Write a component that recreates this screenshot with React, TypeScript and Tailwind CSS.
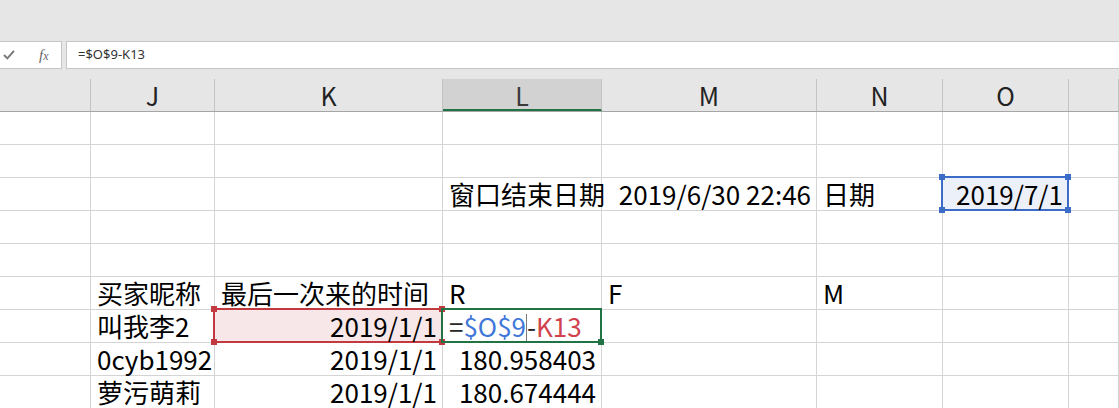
import React from "react";

type Cell = {
  text?: React.ReactNode;
  align?: "left" | "right";
  sel?: "blue" | "red" | "green";
};

const COLS = ["", "J", "K", "L", "M", "N", "O", ""];
const WIDTHS = "grid-cols-[91px_124px_228px_159px_215px_126px_126px_1fr]";

const ROWS: Cell[][] = [
  [],
  [],
  [
    {},
    {},
    {},
    { text: "窗口结束日期" },
    { text: "2019/6/30 22:46", align: "right" },
    { text: "日期" },
    { text: "2019/7/1", align: "right", sel: "blue" },
  ],
  [],
  [],
  [
    {},
    { text: "买家昵称" },
    { text: "最后一次来的时间" },
    { text: "R" },
    { text: "F" },
    { text: "M" },
  ],
  [
    {},
    { text: "叫我李2" },
    { text: "2019/1/1", align: "right", sel: "red" },
    {
      sel: "green",
      text: (
        <>
          <span className="text-[#262626]">=</span>
          <span className="text-[#3f78d8]">$O$9</span>
          <span className="inline-block w-px h-[27px] bg-[#7a7a7a] align-[-4px]" />
          <span className="text-[#262626]">-</span>
          <span className="text-[#d0434d]">K13</span>
        </>
      ),
    },
  ],
  [
    {},
    { text: "0cyb1992" },
    { text: "2019/1/1", align: "right" },
    { text: "180.958403", align: "right" },
  ],
  [
    {},
    { text: "萝污萌莉" },
    { text: "2019/1/1", align: "right" },
    { text: "180.674444", align: "right" },
  ],
];

function Handle({ pos, color }: { pos: string; color: string }) {
  return <span className={`absolute w-[6px] h-[6px] ${pos} ${color}`} />;
}

function Selection({ kind }: { kind: "blue" | "red" | "green" }) {
  if (kind === "blue") {
    return (
      <div className="absolute -left-[2px] -top-[2px] -right-[1px] -bottom-[1px] border-2 border-[#3a6cc8] bg-[#3a6cc8]/10 z-10 pointer-events-none">
        <Handle pos="-left-[4px] -top-[4px]" color="bg-[#3a6cc8]" />
        <Handle pos="-right-[4px] -top-[4px]" color="bg-[#3a6cc8]" />
        <Handle pos="-left-[4px] -bottom-[4px]" color="bg-[#3a6cc8]" />
        <Handle pos="-right-[4px] -bottom-[4px]" color="bg-[#3a6cc8]" />
      </div>
    );
  }
  if (kind === "red") {
    return (
      <div className="absolute -left-[2px] -top-[2px] -right-[1px] -bottom-[1px] border-2 border-[#c23a40] bg-[#c23a40]/12 z-10 pointer-events-none">
        <Handle pos="-left-[4px] -top-[4px]" color="bg-[#c23a40]" />
        <Handle pos="-right-[4px] -top-[4px]" color="bg-[#c23a40]" />
        <Handle pos="-left-[4px] -bottom-[4px]" color="bg-[#c23a40]" />
        <Handle pos="-right-[4px] -bottom-[4px]" color="bg-[#c23a40]" />
      </div>
    );
  }
  return (
    <div className="absolute -left-[2px] -top-[2px] -right-[1px] -bottom-[1px] border-2 border-[#217346] z-20 pointer-events-none">
      <Handle pos="-right-[4px] -bottom-[4px]" color="bg-[#217346]" />
    </div>
  );
}

function GridCell({ cell }: { cell?: Cell }) {
  const c = cell ?? {};
  return (
    <div
      className={`relative h-[33px] border-r border-b border-[#d4d4d4] leading-[32px] whitespace-nowrap ${
        c.align === "right" ? "text-right pr-[5px]" : "text-left pl-[6px]"
      }`}
    >
      {c.sel && <Selection kind={c.sel} />}
      <span className="relative z-30">{c.text}</span>
    </div>
  );
}

export default function App() {
  return (
    <div className="w-[1119px] h-[408px] overflow-hidden bg-white font-['Noto_Sans_CJK_SC',sans-serif] text-black">
      {/* ribbon leftover */}
      <div className="h-[41px] bg-[#e6e6e6]" />

      {/* formula bar */}
      <div className="flex h-[28px] bg-[#e6e6e6]">
        <div className="w-[62px] bg-white border border-l-0 border-[#c6c6c6] flex items-center">
          <svg viewBox="0 0 14 12" className="ml-[3px] w-[12px] h-[10px]" fill="none" stroke="#7a7a7a" strokeWidth="2.4">
            <polyline points="1,6 5,10 13,1" />
          </svg>
          <span className="ml-[24px] font-['Liberation_Serif',serif] italic text-[15px] text-[#666] leading-none">
            f<span className="text-[12px]">x</span>
          </span>
        </div>
        <div className="ml-[4px] flex-1 bg-white border border-r-0 border-[#c6c6c6] flex items-center pl-[11px] font-['Noto_Sans',sans-serif] text-[13px] text-[#333]">
          =$O$9-K13
        </div>
      </div>
      <div className="h-[10px] bg-[#e6e6e6]" />

      {/* column headers */}
      <div className={`grid ${WIDTHS} h-[33px] bg-[#e6e6e6] border-b border-[#a6a6a6]`}>
        {COLS.map((c, i) => (
          <div
            key={i}
            className={`h-[32px] text-center leading-[32px] text-[25px] border-r border-[#c3c3c3] ${
              c === "L" ? "bg-[#d2d2d2] text-[#3a3a3a] border-b-2 border-b-[#217346] -mb-px" : "text-[#222]"
            }`}
          >
            {c}
          </div>
        ))}
      </div>

      {/* cells */}
      <div className="text-[26px]">
        {ROWS.map((row, r) => (
          <div key={r} className={`grid ${WIDTHS}`}>
            {COLS.map((_, ci) => (
              <GridCell key={ci} cell={row[ci]} />
            ))}
          </div>
        ))}
      </div>
    </div>
  );
}
